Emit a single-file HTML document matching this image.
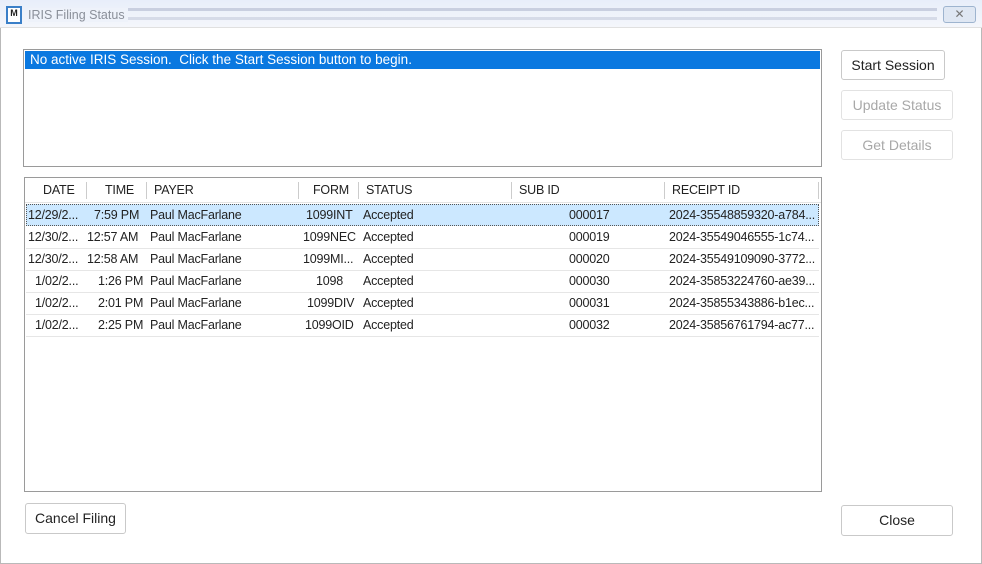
<!DOCTYPE html>
<html><head><style>
*{box-sizing:border-box;margin:0;padding:0}
body{width:982px;height:564px;background:#fff;font-family:"Liberation Sans",sans-serif;font-size:13px;color:#222;position:relative;overflow:hidden}
.win{position:absolute;left:0;top:0;width:982px;height:564px;border:1px solid #b9b9b9;border-top:none}
.title{position:absolute;left:0;top:0;width:982px;height:28px;background:linear-gradient(#e8eefa,#f4f6fb);border-bottom:1px solid #e0e0e0}
.stripe{position:absolute;left:125px;right:45px;height:3px;background:#c9cfe0}
.ttxt{position:absolute;left:28px;top:8px;color:#8a8f99;font-size:12.5px;background:#eef2fa;padding-right:3px}
.icon{position:absolute;left:6px;top:6px;width:16px;height:18px;border:2px solid #3a7fc8;background:#fff;font-size:9px;font-weight:bold;text-align:center;line-height:11px;color:#222}
.xbtn{position:absolute;left:943px;top:6px;width:33px;height:17px;border:1px solid #9eb4cf;border-radius:3px;background:#dfe7f3;text-align:center;font-size:12px;line-height:15px;color:#777}
.box{position:absolute;border:1px solid #9a9a9a;background:#fff}
.sel{position:absolute;left:1px;top:1px;right:1px;height:18px;background:#0a78e0;color:#fff;padding-left:5px;line-height:18px;font-size:13.5px}
.btn{position:absolute;border:1px solid #c9c9c9;border-radius:3px;background:#fff;text-align:center;font-size:14px;color:#222}
.dis{color:#a8a8a8;border-color:#e2e2e2}
.c{position:absolute;white-space:nowrap;font-size:12.5px;letter-spacing:-0.2px}
.hd{position:absolute;top:0;left:0;right:0;height:25px;border-bottom:1px solid #e4e4e4}
.sep{position:absolute;top:4px;width:1px;height:17px;background:#ccc}
.row{position:absolute;left:1px;right:2px;height:22px;border-bottom:1px solid #e6e6e6;line-height:21px;overflow:hidden}
</style></head><body>
<div class="win"></div>
<div class="title">
<div class="stripe" style="top:8px"></div><div class="stripe" style="top:17px;background:#d6dbe8"></div>
<div class="icon">M</div>
<div class="ttxt">IRIS Filing Status</div>
<div class="xbtn">✕</div>
</div>
<div class="box" style="left:23px;top:49px;width:799px;height:118px">
<div class="sel">No active IRIS Session.&nbsp; Click the Start Session button to begin.</div>
</div>
<div class="btn" style="left:841px;top:50px;width:104px;height:30px;line-height:28px">Start Session</div>
<div class="btn dis" style="left:841px;top:90px;width:112px;height:30px;line-height:28px">Update Status</div>
<div class="btn dis" style="left:841px;top:130px;width:112px;height:30px;line-height:28px">Get Details</div>
<div class="box" style="left:24px;top:177px;width:798px;height:315px">
<div class="hd">
<span class="c" style="left:18px;top:5px">DATE</span><div class="sep" style="left:61px"></div>
<span class="c" style="left:80px;top:5px">TIME</span><div class="sep" style="left:121px"></div>
<span class="c" style="left:129px;top:5px">PAYER</span><div class="sep" style="left:273px"></div>
<span class="c" style="left:288px;top:5px">FORM</span><div class="sep" style="left:333px"></div>
<span class="c" style="left:341px;top:5px">STATUS</span><div class="sep" style="left:486px"></div>
<span class="c" style="left:494px;top:5px">SUB ID</span><div class="sep" style="left:639px"></div>
<span class="c" style="left:647px;top:5px">RECEIPT ID</span><div class="sep" style="left:793px"></div>
</div>
<div class="row" style="top:26px;background:#cce8ff;border:1px dotted #555"><span class="c" style="left:1px">12/29/2...</span><span class="c" style="left:67px">7:59 PM</span><span class="c" style="left:123px">Paul MacFarlane</span><span class="c" style="left:279px">1099INT</span><span class="c" style="left:336px">Accepted</span><span class="c" style="left:542px">000017</span><span class="c" style="left:642px">2024-35548859320-a784...</span></div>
<div class="row" style="top:49px"><span class="c" style="left:2px">12/30/2...</span><span class="c" style="left:61px">12:57 AM</span><span class="c" style="left:124px">Paul MacFarlane</span><span class="c" style="left:277px">1099NEC</span><span class="c" style="left:337px">Accepted</span><span class="c" style="left:543px">000019</span><span class="c" style="left:643px">2024-35549046555-1c74...</span></div>
<div class="row" style="top:71px"><span class="c" style="left:2px">12/30/2...</span><span class="c" style="left:61px">12:58 AM</span><span class="c" style="left:124px">Paul MacFarlane</span><span class="c" style="left:277px">1099MI...</span><span class="c" style="left:337px">Accepted</span><span class="c" style="left:543px">000020</span><span class="c" style="left:643px">2024-35549109090-3772...</span></div>
<div class="row" style="top:93px"><span class="c" style="left:9px">1/02/2...</span><span class="c" style="left:72px">1:26 PM</span><span class="c" style="left:124px">Paul MacFarlane</span><span class="c" style="left:290px">1098</span><span class="c" style="left:337px">Accepted</span><span class="c" style="left:543px">000030</span><span class="c" style="left:643px">2024-35853224760-ae39...</span></div>
<div class="row" style="top:115px"><span class="c" style="left:9px">1/02/2...</span><span class="c" style="left:72px">2:01 PM</span><span class="c" style="left:124px">Paul MacFarlane</span><span class="c" style="left:281px">1099DIV</span><span class="c" style="left:337px">Accepted</span><span class="c" style="left:543px">000031</span><span class="c" style="left:643px">2024-35855343886-b1ec...</span></div>
<div class="row" style="top:137px"><span class="c" style="left:9px">1/02/2...</span><span class="c" style="left:72px">2:25 PM</span><span class="c" style="left:124px">Paul MacFarlane</span><span class="c" style="left:279px">1099OID</span><span class="c" style="left:337px">Accepted</span><span class="c" style="left:543px">000032</span><span class="c" style="left:643px">2024-35856761794-ac77...</span></div>
</div>
<div class="btn" style="left:25px;top:503px;width:101px;height:31px;line-height:29px">Cancel Filing</div>
<div class="btn" style="left:841px;top:505px;width:112px;height:31px;line-height:29px">Close</div>
</body></html>
